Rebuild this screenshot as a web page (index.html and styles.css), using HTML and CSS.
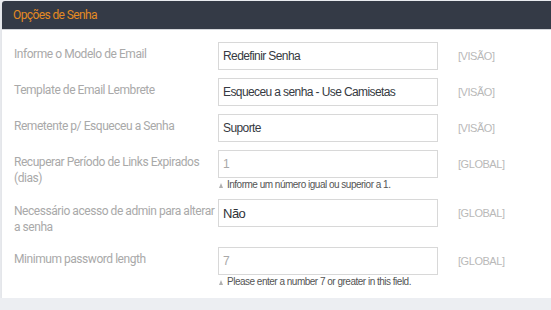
FILE: index.html
```html
<!DOCTYPE html>
<html lang="pt">
<head>
  <meta charset="UTF-8">
  <meta name="viewport" content="width=device-width, initial-scale=1.0">
  <title>Opções de Senha</title>
  <link rel="stylesheet" href="styles.css">
</head>
<body>
  <div class="panel">
    <div class="panel-heading">Opções de Senha</div>

    <div class="panel-body">
      <div class="row">
        <label class="row-label" for="modelo">Informe o Modelo de Email</label>
        <div class="field">
          <input type="text" id="modelo" class="form-control" value="Redefinir Senha" />
        </div>
        <div class="scope">[VISÃO]</div>
      </div>

      <div class="row">
        <label class="row-label" for="lembrete">Template de Email Lembrete</label>
        <div class="field">
          <input type="text" id="lembrete" class="form-control" value="Esqueceu a senha - Use Camisetas" />
        </div>
        <div class="scope">[VISÃO]</div>
      </div>

      <div class="row">
        <label class="row-label" for="remetente">Remetente p/ Esqueceu a Senha</label>
        <div class="field">
          <input type="text" id="remetente" class="form-control" value="Suporte" />
        </div>
        <div class="scope">[VISÃO]</div>
      </div>

      <div class="row">
        <label class="row-label" for="periodo">Recuperar Período de Links Expirados (dias)</label>
        <div class="field">
          <input type="text" id="periodo" class="form-control muted" value="1" />
          <div class="hint"><span class="hint-icon"></span>Informe um número igual ou superior a 1.</div>
        </div>
        <div class="scope">[GLOBAL]</div>
      </div>

      <div class="row">
        <label class="row-label" for="admin">Necessário acesso de admin para alterar a senha</label>
        <div class="field">
          <input type="text" id="admin" class="form-control big" value="Não" />
        </div>
        <div class="scope">[GLOBAL]</div>
      </div>

      <div class="row">
        <label class="row-label" for="minlen">Minimum password length</label>
        <div class="field">
          <input type="text" id="minlen" class="form-control muted" value="7" />
          <div class="hint"><span class="hint-icon"></span>Please enter a number 7 or greater in this field.</div>
        </div>
        <div class="scope">[GLOBAL]</div>
      </div>
    </div>
  </div>
</body>
</html>
```

FILE: styles.css
```css
body {
  margin: 0;
  padding: 0;
  font-family: Roboto, "Liberation Sans", sans-serif;
  background-color: #eceef2;
  overflow: hidden;
}
.panel {
  margin: 1px 0 0 2px;
  width: 570px;
  background-color: white;
  border-radius: 3px 3px 0 0;
  box-shadow: 0px 2px 5px rgba(0, 0, 0, 0.08);
}
.panel-heading {
  height: 28px;
  line-height: 28px;
  padding-left: 11px;
  background-color: #343a46;
  color: #e48a22;
  font-size: 12px;
  letter-spacing: -0.6px;
  border-radius: 3px 3px 0 0;
  border-bottom: 1px solid #d4d6da;
}
.panel-body {
  padding: 12px 0 2px 12px;
}
.row {
  display: grid;
  grid-template-columns: 204px 220px auto;
  margin-bottom: 8px;
}
.row-label {
  grid-column: 1;
  padding: 4px 0;
  color: #a9a9a9;
  font-size: 12px;
  line-height: 16px;
  letter-spacing: -0.45px;
}
.field {
  grid-column: 2;
}
.form-control {
  display: block;
  width: 220px;
  height: 28px;
  margin: 0;
  padding: 0 4px;
  border: 1px solid #d8d8d8;
  box-sizing: border-box;
  font-family: "Liberation Sans", Arial, sans-serif;
  font-size: 12px;
  letter-spacing: -0.6px;
  color: #363a42;
  background-color: white;
  outline: none;
}
.form-control.muted {
  color: #a8a8a8;
}
.form-control.big {
  font-size: 13px;
  letter-spacing: -0.5px;
  color: #2f3238;
}
.hint {
  display: flex;
  align-items: center;
  height: 13px;
  font-family: "Liberation Sans", Arial, sans-serif;
  font-size: 10px;
  letter-spacing: -0.5px;
  color: #555;
}
.hint-icon {
  width: 0;
  height: 0;
  margin: 1px 4px 0 1px;
  border-left: 2.5px solid transparent;
  border-right: 2.5px solid transparent;
  border-bottom: 5px solid #b0b0b0;
}
.scope {
  grid-column: 3;
  padding: 6px 0 0 20px;
  line-height: 16px;
  font-family: "Liberation Sans", Arial, sans-serif;
  font-size: 11px;
  letter-spacing: -0.45px;
  color: #b9b9b9;
}
```
